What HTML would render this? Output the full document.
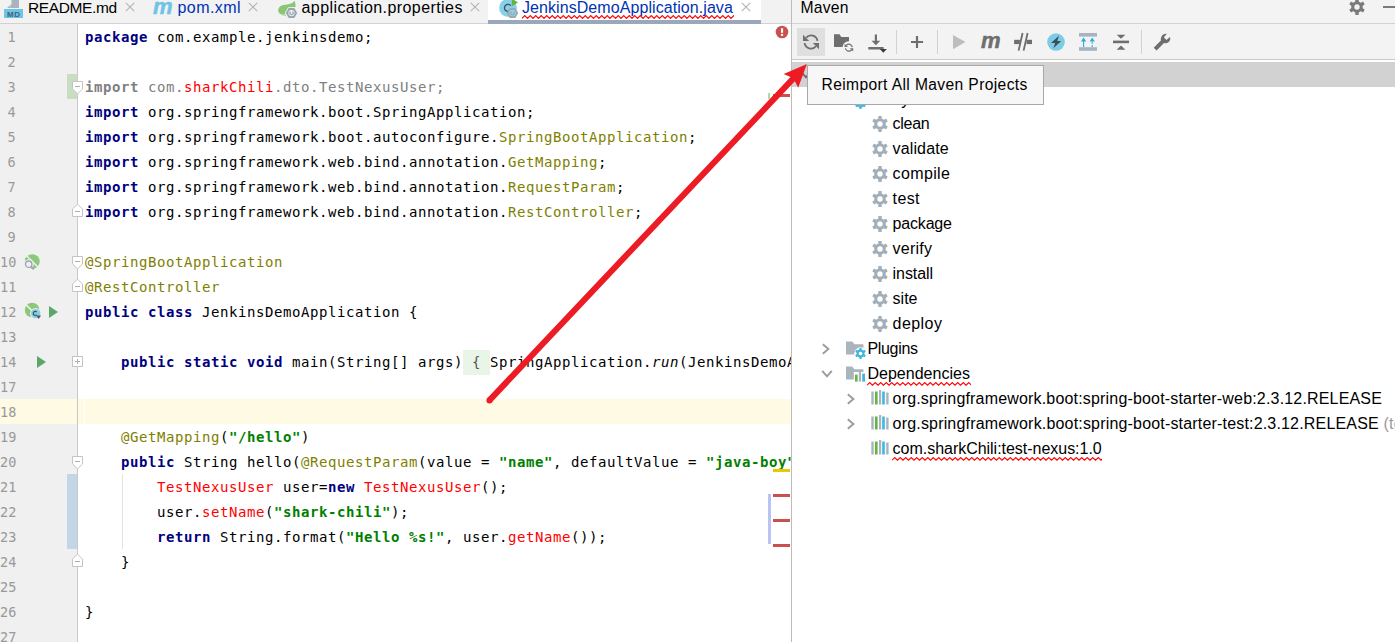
<!DOCTYPE html>
<html>
<head>
<meta charset="utf-8">
<title>JenkinsDemoApplication.java</title>
<style>
html,body{margin:0;padding:0;}
body{width:1395px;height:642px;overflow:hidden;background:#fff;position:relative;font-family:"Liberation Sans","DejaVu Sans",sans-serif;}
.abs{position:absolute;}
/* ---------- tab bar ---------- */
#tabs{left:0;top:0;width:791px;height:23px;background:#f2f2f2;border-bottom:1px solid #d1d1d1;}
.tab{position:absolute;top:-3px;height:22px;line-height:22px;font-size:16px;color:#000;white-space:nowrap;}
#activetab{left:488px;top:0;width:273px;height:20px;background:#fff;}
#activeline{left:488px;top:20px;width:273px;height:4px;background:#9aa7bd;}
/* ---------- editor ---------- */
#gutter{left:0;top:24px;width:77px;height:618px;background:#f0f0f0;border-right:1px solid #c9c9c9;}
#curline{left:78px;top:399px;width:713px;height:25px;background:#fffae3;}
#curgut{left:0;top:399px;width:77px;height:25px;background:#fffae3;}
.ln{position:absolute;left:0;width:15.6px;text-align:right;height:25px;line-height:25px;font-family:"DejaVu Sans Mono","Liberation Mono",monospace;font-size:13.5px;color:#999;white-space:pre;}
.cl{position:absolute;left:85px;height:25px;line-height:25px;font-family:"DejaVu Sans Mono","Liberation Mono",monospace;font-size:14px;letter-spacing:0.5713px;color:#000;white-space:pre;}
.k{color:#000080;font-weight:bold;}
.a{color:#808000;}
.s{color:#008000;font-weight:bold;}
.r{color:#ff0000;}
.g{color:#808080;}
.gk{color:#808080;font-weight:bold;}
.i{font-style:italic;}
.fold{background:#e9f5e6;color:#555;display:inline-block;height:25px;}
#edclip{left:0;top:24px;width:791px;height:618px;overflow:hidden;}
/* ---------- maven ---------- */
#divider{left:791px;top:0;width:1px;height:642px;background:#bcbcbc;}
#mv{left:792px;top:0;width:603px;height:642px;background:#fff;}
#mvhead{left:0;top:0;width:603px;height:23px;background:#f3f3f3;border-bottom:1px solid #d1d1d1;}
#mvtool{left:0;top:24px;width:603px;height:35px;background:#f3f3f3;border-bottom:1px solid #c9c9c9;}
#mvsel{left:0;top:62px;width:603px;height:25px;background:#d2d2d2;}
.tr{position:absolute;height:25px;line-height:25px;font-size:16px;color:#000;white-space:nowrap;}
#tip{left:15px;top:65px;width:235px;height:38px;background:#f7f7f7;border:1px solid #a8a8a8;box-sizing:content-box;}
#tip span{position:absolute;left:13.5px;top:0px;line-height:37px;font-size:15.6px;letter-spacing:0.385px;color:#000;white-space:nowrap;}
</style>
</head>
<body>
<!-- TAB BAR -->
<div id="tabs" class="abs"></div>
<div id="activetab" class="abs"></div>
<div id="activeline" class="abs"></div>
<div class="tab" style="left:28px;font-size:15.5px;letter-spacing:-0.38px;">README.md</div>
<div class="tab" style="left:177.5px;color:#0033b3;letter-spacing:0.42px;">pom.xml</div>
<div class="tab" style="left:301.5px;letter-spacing:0.42px;">application.properties</div>
<div class="tab" style="left:522px;color:#0033b3;letter-spacing:0.07px;">JenkinsDemoApplication.java</div>

<!-- EDITOR -->
<div id="gutter" class="abs"></div>
<div id="curgut" class="abs"></div>
<div id="curline" class="abs"></div>
<div id="edclip" class="abs">
<div id="lines">
<div class="ln" style="top:1px;">1</div>
<div class="cl" style="top:1px;"><span class="k">package</span> com.example.jenkinsdemo;</div>
<div class="ln" style="top:26px;">2</div>
<div class="ln" style="top:51px;">3</div>
<div class="cl" style="top:51px;"><span class="gk">import</span><span class="g"> com.</span><span class="r">sharkChili</span><span class="g">.dto.TestNexusUser;</span></div>
<div class="ln" style="top:76px;">4</div>
<div class="cl" style="top:76px;"><span class="k">import</span> org.springframework.boot.SpringApplication;</div>
<div class="ln" style="top:101px;">5</div>
<div class="cl" style="top:101px;"><span class="k">import</span> org.springframework.boot.autoconfigure.<span class="a">SpringBootApplication</span>;</div>
<div class="ln" style="top:126px;">6</div>
<div class="cl" style="top:126px;"><span class="k">import</span> org.springframework.web.bind.annotation.<span class="a">GetMapping</span>;</div>
<div class="ln" style="top:151px;">7</div>
<div class="cl" style="top:151px;"><span class="k">import</span> org.springframework.web.bind.annotation.<span class="a">RequestParam</span>;</div>
<div class="ln" style="top:176px;">8</div>
<div class="cl" style="top:176px;"><span class="k">import</span> org.springframework.web.bind.annotation.<span class="a">RestController</span>;</div>
<div class="ln" style="top:201px;">9</div>
<div class="ln" style="top:226px;">10</div>
<div class="cl" style="top:226px;"><span class="a">@SpringBootApplication</span></div>
<div class="ln" style="top:251px;">11</div>
<div class="cl" style="top:251px;"><span class="a">@RestController</span></div>
<div class="ln" style="top:276px;">12</div>
<div class="cl" style="top:276px;"><span class="k">public class</span> JenkinsDemoApplication {</div>
<div class="ln" style="top:301px;">13</div>
<div class="ln" style="top:326px;">14</div>
<div class="cl" style="top:326px;">    <span class="k">public static void</span> main(String[] args)<span class="fold"> { </span>SpringApplication.<span class="i">run</span>(JenkinsDemoApplication.<span class="k">class</span>, args); }</div>
<div class="ln" style="top:351px;">17</div>
<div class="ln" style="top:376px;">18</div>
<div class="ln" style="top:401px;">19</div>
<div class="cl" style="top:401px;">    <span class="a">@GetMapping</span>(<span class="s">"/hello"</span>)</div>
<div class="ln" style="top:426px;">20</div>
<div class="cl" style="top:426px;">    <span class="k">public</span> String hello(<span class="a">@RequestParam</span>(value = <span class="s">"name"</span>, defaultValue = <span class="s">"java-boy"</span>) String name) {</div>
<div class="ln" style="top:451px;">21</div>
<div class="cl" style="top:451px;">        <span class="r">TestNexusUser</span> user=<span class="k">new</span> <span class="r">TestNexusUser</span>();</div>
<div class="ln" style="top:476px;">22</div>
<div class="cl" style="top:476px;">        user.<span class="r">setName</span>(<span class="s">"shark-chili"</span>);</div>
<div class="ln" style="top:501px;">23</div>
<div class="cl" style="top:501px;">        <span class="k">return</span> String.format(<span class="s">"Hello %s!"</span>, user.<span class="r">getName</span>());</div>
<div class="ln" style="top:526px;">24</div>
<div class="cl" style="top:526px;">    }</div>
<div class="ln" style="top:551px;">25</div>
<div class="ln" style="top:576px;">26</div>
<div class="cl" style="top:576px;">}</div>
<div class="ln" style="top:601px;">27</div>
</div>
</div>

<!-- MAVEN -->
<div id="divider" class="abs"></div>
<div id="mv" class="abs">
  <div id="mvhead" class="abs"></div>
  <div class="tr" style="left:8.5px;top:-5px;font-size:15.7px;letter-spacing:0.2px;color:#000;">Maven</div>
  <div id="mvtool" class="abs"></div>
  <div id="mvsel" class="abs"></div>
  <div id="tree">
<svg class="abs" style="left:7.5px;top:70px" width="12" height="10" viewBox="0 0 12 10"><path d="M1.2 1.8 L6 7.4 L10.8 1.8" fill="none" stroke="#6e6e6e" stroke-width="1.9"/></svg>
<svg class="abs" style="left:54px;top:91px" width="20" height="18" viewBox="0 0 20 18"><path d="M0 0.4 H6.2 L8.4 3.2 H17.4 V13.6 H0Z" fill="#aab4bc"/><circle cx="14.5" cy="12.6" r="6.3" fill="#fff"/></svg>
<svg class="abs" style="left:63px;top:98px" width="11" height="11" viewBox="0 0 16 16"><g fill="#40b6e0"><rect x="6.3" y="0" width="3.4" height="4" rx="0.6" transform="rotate(0 8 8)"/><rect x="6.3" y="0" width="3.4" height="4" rx="0.6" transform="rotate(60 8 8)"/><rect x="6.3" y="0" width="3.4" height="4" rx="0.6" transform="rotate(120 8 8)"/><rect x="6.3" y="0" width="3.4" height="4" rx="0.6" transform="rotate(180 8 8)"/><rect x="6.3" y="0" width="3.4" height="4" rx="0.6" transform="rotate(240 8 8)"/><rect x="6.3" y="0" width="3.4" height="4" rx="0.6" transform="rotate(300 8 8)"/></g><circle cx="8" cy="8" r="4.25" fill="none" stroke="#40b6e0" stroke-width="3.1"/></svg>
<div class="tr" style="left:75.4px;top:87px;letter-spacing:0px;color:#000;">Lifecycle</div>
<svg class="abs" style="left:80px;top:116px" width="16" height="16" viewBox="0 0 16 16"><g fill="#a3afb8"><rect x="6.3" y="0" width="3.4" height="4" rx="0.6" transform="rotate(0 8 8)"/><rect x="6.3" y="0" width="3.4" height="4" rx="0.6" transform="rotate(60 8 8)"/><rect x="6.3" y="0" width="3.4" height="4" rx="0.6" transform="rotate(120 8 8)"/><rect x="6.3" y="0" width="3.4" height="4" rx="0.6" transform="rotate(180 8 8)"/><rect x="6.3" y="0" width="3.4" height="4" rx="0.6" transform="rotate(240 8 8)"/><rect x="6.3" y="0" width="3.4" height="4" rx="0.6" transform="rotate(300 8 8)"/></g><circle cx="8" cy="8" r="4.25" fill="none" stroke="#a3afb8" stroke-width="3.1"/></svg>
<div class="tr" style="left:100.6px;top:111px;letter-spacing:-0.27px;color:#000;">clean</div>
<svg class="abs" style="left:80px;top:141px" width="16" height="16" viewBox="0 0 16 16"><g fill="#a3afb8"><rect x="6.3" y="0" width="3.4" height="4" rx="0.6" transform="rotate(0 8 8)"/><rect x="6.3" y="0" width="3.4" height="4" rx="0.6" transform="rotate(60 8 8)"/><rect x="6.3" y="0" width="3.4" height="4" rx="0.6" transform="rotate(120 8 8)"/><rect x="6.3" y="0" width="3.4" height="4" rx="0.6" transform="rotate(180 8 8)"/><rect x="6.3" y="0" width="3.4" height="4" rx="0.6" transform="rotate(240 8 8)"/><rect x="6.3" y="0" width="3.4" height="4" rx="0.6" transform="rotate(300 8 8)"/></g><circle cx="8" cy="8" r="4.25" fill="none" stroke="#a3afb8" stroke-width="3.1"/></svg>
<div class="tr" style="left:100.6px;top:136px;letter-spacing:0.13px;color:#000;">validate</div>
<svg class="abs" style="left:80px;top:166px" width="16" height="16" viewBox="0 0 16 16"><g fill="#a3afb8"><rect x="6.3" y="0" width="3.4" height="4" rx="0.6" transform="rotate(0 8 8)"/><rect x="6.3" y="0" width="3.4" height="4" rx="0.6" transform="rotate(60 8 8)"/><rect x="6.3" y="0" width="3.4" height="4" rx="0.6" transform="rotate(120 8 8)"/><rect x="6.3" y="0" width="3.4" height="4" rx="0.6" transform="rotate(180 8 8)"/><rect x="6.3" y="0" width="3.4" height="4" rx="0.6" transform="rotate(240 8 8)"/><rect x="6.3" y="0" width="3.4" height="4" rx="0.6" transform="rotate(300 8 8)"/></g><circle cx="8" cy="8" r="4.25" fill="none" stroke="#a3afb8" stroke-width="3.1"/></svg>
<div class="tr" style="left:100.6px;top:161px;letter-spacing:0.366px;color:#000;">compile</div>
<svg class="abs" style="left:80px;top:191px" width="16" height="16" viewBox="0 0 16 16"><g fill="#a3afb8"><rect x="6.3" y="0" width="3.4" height="4" rx="0.6" transform="rotate(0 8 8)"/><rect x="6.3" y="0" width="3.4" height="4" rx="0.6" transform="rotate(60 8 8)"/><rect x="6.3" y="0" width="3.4" height="4" rx="0.6" transform="rotate(120 8 8)"/><rect x="6.3" y="0" width="3.4" height="4" rx="0.6" transform="rotate(180 8 8)"/><rect x="6.3" y="0" width="3.4" height="4" rx="0.6" transform="rotate(240 8 8)"/><rect x="6.3" y="0" width="3.4" height="4" rx="0.6" transform="rotate(300 8 8)"/></g><circle cx="8" cy="8" r="4.25" fill="none" stroke="#a3afb8" stroke-width="3.1"/></svg>
<div class="tr" style="left:100.6px;top:186px;letter-spacing:0.376px;color:#000;">test</div>
<svg class="abs" style="left:80px;top:216px" width="16" height="16" viewBox="0 0 16 16"><g fill="#a3afb8"><rect x="6.3" y="0" width="3.4" height="4" rx="0.6" transform="rotate(0 8 8)"/><rect x="6.3" y="0" width="3.4" height="4" rx="0.6" transform="rotate(60 8 8)"/><rect x="6.3" y="0" width="3.4" height="4" rx="0.6" transform="rotate(120 8 8)"/><rect x="6.3" y="0" width="3.4" height="4" rx="0.6" transform="rotate(180 8 8)"/><rect x="6.3" y="0" width="3.4" height="4" rx="0.6" transform="rotate(240 8 8)"/><rect x="6.3" y="0" width="3.4" height="4" rx="0.6" transform="rotate(300 8 8)"/></g><circle cx="8" cy="8" r="4.25" fill="none" stroke="#a3afb8" stroke-width="3.1"/></svg>
<div class="tr" style="left:100.6px;top:211px;letter-spacing:-0.186px;color:#000;">package</div>
<svg class="abs" style="left:80px;top:241px" width="16" height="16" viewBox="0 0 16 16"><g fill="#a3afb8"><rect x="6.3" y="0" width="3.4" height="4" rx="0.6" transform="rotate(0 8 8)"/><rect x="6.3" y="0" width="3.4" height="4" rx="0.6" transform="rotate(60 8 8)"/><rect x="6.3" y="0" width="3.4" height="4" rx="0.6" transform="rotate(120 8 8)"/><rect x="6.3" y="0" width="3.4" height="4" rx="0.6" transform="rotate(180 8 8)"/><rect x="6.3" y="0" width="3.4" height="4" rx="0.6" transform="rotate(240 8 8)"/><rect x="6.3" y="0" width="3.4" height="4" rx="0.6" transform="rotate(300 8 8)"/></g><circle cx="8" cy="8" r="4.25" fill="none" stroke="#a3afb8" stroke-width="3.1"/></svg>
<div class="tr" style="left:100.6px;top:236px;letter-spacing:0.244px;color:#000;">verify</div>
<svg class="abs" style="left:80px;top:266px" width="16" height="16" viewBox="0 0 16 16"><g fill="#a3afb8"><rect x="6.3" y="0" width="3.4" height="4" rx="0.6" transform="rotate(0 8 8)"/><rect x="6.3" y="0" width="3.4" height="4" rx="0.6" transform="rotate(60 8 8)"/><rect x="6.3" y="0" width="3.4" height="4" rx="0.6" transform="rotate(120 8 8)"/><rect x="6.3" y="0" width="3.4" height="4" rx="0.6" transform="rotate(180 8 8)"/><rect x="6.3" y="0" width="3.4" height="4" rx="0.6" transform="rotate(240 8 8)"/><rect x="6.3" y="0" width="3.4" height="4" rx="0.6" transform="rotate(300 8 8)"/></g><circle cx="8" cy="8" r="4.25" fill="none" stroke="#a3afb8" stroke-width="3.1"/></svg>
<div class="tr" style="left:100.6px;top:261px;letter-spacing:-0.072px;color:#000;">install</div>
<svg class="abs" style="left:80px;top:291px" width="16" height="16" viewBox="0 0 16 16"><g fill="#a3afb8"><rect x="6.3" y="0" width="3.4" height="4" rx="0.6" transform="rotate(0 8 8)"/><rect x="6.3" y="0" width="3.4" height="4" rx="0.6" transform="rotate(60 8 8)"/><rect x="6.3" y="0" width="3.4" height="4" rx="0.6" transform="rotate(120 8 8)"/><rect x="6.3" y="0" width="3.4" height="4" rx="0.6" transform="rotate(180 8 8)"/><rect x="6.3" y="0" width="3.4" height="4" rx="0.6" transform="rotate(240 8 8)"/><rect x="6.3" y="0" width="3.4" height="4" rx="0.6" transform="rotate(300 8 8)"/></g><circle cx="8" cy="8" r="4.25" fill="none" stroke="#a3afb8" stroke-width="3.1"/></svg>
<div class="tr" style="left:100.6px;top:286px;letter-spacing:0px;color:#000;">site</div>
<svg class="abs" style="left:80px;top:316px" width="16" height="16" viewBox="0 0 16 16"><g fill="#a3afb8"><rect x="6.3" y="0" width="3.4" height="4" rx="0.6" transform="rotate(0 8 8)"/><rect x="6.3" y="0" width="3.4" height="4" rx="0.6" transform="rotate(60 8 8)"/><rect x="6.3" y="0" width="3.4" height="4" rx="0.6" transform="rotate(120 8 8)"/><rect x="6.3" y="0" width="3.4" height="4" rx="0.6" transform="rotate(180 8 8)"/><rect x="6.3" y="0" width="3.4" height="4" rx="0.6" transform="rotate(240 8 8)"/><rect x="6.3" y="0" width="3.4" height="4" rx="0.6" transform="rotate(300 8 8)"/></g><circle cx="8" cy="8" r="4.25" fill="none" stroke="#a3afb8" stroke-width="3.1"/></svg>
<div class="tr" style="left:100.6px;top:311px;letter-spacing:0.441px;color:#000;">deploy</div>
<svg class="abs" style="left:29px;top:343px" width="10" height="12" viewBox="0 0 10 12"><path d="M1.8 1.2 L7.4 6 L1.8 10.8" fill="none" stroke="#9b9b9b" stroke-width="1.9"/></svg>
<svg class="abs" style="left:54px;top:341px" width="20" height="18" viewBox="0 0 20 18"><path d="M0 0.4 H6.2 L8.4 3.2 H17.4 V13.6 H0Z" fill="#aab4bc"/><circle cx="14.5" cy="12.6" r="6.3" fill="#fff"/></svg>
<svg class="abs" style="left:63px;top:348px" width="11" height="11" viewBox="0 0 16 16"><g fill="#40b6e0"><rect x="6.3" y="0" width="3.4" height="4" rx="0.6" transform="rotate(0 8 8)"/><rect x="6.3" y="0" width="3.4" height="4" rx="0.6" transform="rotate(60 8 8)"/><rect x="6.3" y="0" width="3.4" height="4" rx="0.6" transform="rotate(120 8 8)"/><rect x="6.3" y="0" width="3.4" height="4" rx="0.6" transform="rotate(180 8 8)"/><rect x="6.3" y="0" width="3.4" height="4" rx="0.6" transform="rotate(240 8 8)"/><rect x="6.3" y="0" width="3.4" height="4" rx="0.6" transform="rotate(300 8 8)"/></g><circle cx="8" cy="8" r="4.25" fill="none" stroke="#40b6e0" stroke-width="3.1"/></svg>
<div class="tr" style="left:75.4px;top:336px;letter-spacing:-0.312px;color:#000;">Plugins</div>
<svg class="abs" style="left:28.5px;top:369px" width="12" height="10" viewBox="0 0 12 10"><path d="M1.2 1.8 L6 7.4 L10.8 1.8" fill="none" stroke="#9b9b9b" stroke-width="1.9"/></svg>
<svg class="abs" style="left:54px;top:366px" width="20" height="18" viewBox="0 0 20 18"><path d="M0 0.4 H6.2 L8.4 3.2 H17.4 V13.6 H0Z" fill="#aab4bc"/><rect x="7.8" y="6" width="12.2" height="12" fill="#fff"/><rect x="9" y="8.6" width="2.6" height="7" fill="#62b543"/><rect x="12.8" y="5.6" width="2.2" height="10" fill="#aab4bc"/><rect x="16.2" y="7.6" width="2.8" height="8" fill="#40b6e0"/></svg>
<div class="tr" style="left:75.4px;top:361px;letter-spacing:0.025px;color:#000;">Dependencies</div>
<svg class="abs" style="left:75.0px;top:381.5px" width="104" height="4" viewBox="0 0 104 4"><path d="M0 3.2 L2.75 0.6 L5.5 3.2 L8.25 0.6 L11 3.2 L13.75 0.6 L16.5 3.2 L19.25 0.6 L22 3.2 L24.75 0.6 L27.5 3.2 L30.25 0.6 L33 3.2 L35.75 0.6 L38.5 3.2 L41.25 0.6 L44 3.2 L46.75 0.6 L49.5 3.2 L52.25 0.6 L55 3.2 L57.75 0.6 L60.5 3.2 L63.25 0.6 L66 3.2 L68.75 0.6 L71.5 3.2 L74.25 0.6 L77 3.2 L79.75 0.6 L82.5 3.2 L85.25 0.6 L88 3.2 L90.75 0.6 L93.5 3.2 L96.25 0.6 L99 3.2 L101.75 0.6 L104.5 3.2" fill="none" stroke="#ff0000" stroke-width="1.15"/></svg>
<svg class="abs" style="left:54px;top:393px" width="10" height="12" viewBox="0 0 10 12"><path d="M1.8 1.2 L7.4 6 L1.8 10.8" fill="none" stroke="#9b9b9b" stroke-width="1.9"/></svg>
<svg class="abs" style="left:79px;top:390px" width="18" height="15" viewBox="0 0 18 15"><rect x="0.3" y="1.5" width="2.4" height="13" fill="#aab4bc"/><rect x="4" y="1.5" width="2.6" height="13" fill="#62b543"/><rect x="8" y="0" width="2.2" height="14.5" fill="#aab4bc"/><rect x="11.2" y="1.5" width="2.6" height="13" fill="#40b6e0"/><rect x="15.2" y="2.5" width="2.4" height="12" fill="#aab4bc"/></svg>
<div class="tr" style="left:100.6px;top:386px;letter-spacing:0.175px;color:#000;">org.springframework.boot:spring-boot-starter-web:2.3.12.RELEASE</div>
<svg class="abs" style="left:54px;top:418px" width="10" height="12" viewBox="0 0 10 12"><path d="M1.8 1.2 L7.4 6 L1.8 10.8" fill="none" stroke="#9b9b9b" stroke-width="1.9"/></svg>
<svg class="abs" style="left:79px;top:415px" width="18" height="15" viewBox="0 0 18 15"><rect x="0.3" y="1.5" width="2.4" height="13" fill="#aab4bc"/><rect x="4" y="1.5" width="2.6" height="13" fill="#62b543"/><rect x="8" y="0" width="2.2" height="14.5" fill="#aab4bc"/><rect x="11.2" y="1.5" width="2.6" height="13" fill="#40b6e0"/><rect x="15.2" y="2.5" width="2.4" height="12" fill="#aab4bc"/></svg>
<div class="tr" style="left:100.6px;top:411px;letter-spacing:0.178px;color:#000;">org.springframework.boot:spring-boot-starter-test:2.3.12.RELEASE<span style="color:#999"> (test)</span></div>
<svg class="abs" style="left:79px;top:440px" width="18" height="15" viewBox="0 0 18 15"><rect x="0.3" y="1.5" width="2.4" height="13" fill="#aab4bc"/><rect x="4" y="1.5" width="2.6" height="13" fill="#62b543"/><rect x="8" y="0" width="2.2" height="14.5" fill="#aab4bc"/><rect x="11.2" y="1.5" width="2.6" height="13" fill="#40b6e0"/><rect x="15.2" y="2.5" width="2.4" height="12" fill="#aab4bc"/></svg>
<div class="tr" style="left:100.6px;top:436px;letter-spacing:-0.026px;color:#000;">com.sharkChili:test-nexus:1.0</div>
<svg class="abs" style="left:100.0px;top:456.6px" width="210" height="4" viewBox="0 0 210 4"><path d="M0 3.2 L2.75 0.6 L5.5 3.2 L8.25 0.6 L11 3.2 L13.75 0.6 L16.5 3.2 L19.25 0.6 L22 3.2 L24.75 0.6 L27.5 3.2 L30.25 0.6 L33 3.2 L35.75 0.6 L38.5 3.2 L41.25 0.6 L44 3.2 L46.75 0.6 L49.5 3.2 L52.25 0.6 L55 3.2 L57.75 0.6 L60.5 3.2 L63.25 0.6 L66 3.2 L68.75 0.6 L71.5 3.2 L74.25 0.6 L77 3.2 L79.75 0.6 L82.5 3.2 L85.25 0.6 L88 3.2 L90.75 0.6 L93.5 3.2 L96.25 0.6 L99 3.2 L101.75 0.6 L104.5 3.2 L107.25 0.6 L110 3.2 L112.75 0.6 L115.5 3.2 L118.25 0.6 L121 3.2 L123.75 0.6 L126.5 3.2 L129.25 0.6 L132 3.2 L134.75 0.6 L137.5 3.2 L140.25 0.6 L143 3.2 L145.75 0.6 L148.5 3.2 L151.25 0.6 L154 3.2 L156.75 0.6 L159.5 3.2 L162.25 0.6 L165 3.2 L167.75 0.6 L170.5 3.2 L173.25 0.6 L176 3.2 L178.75 0.6 L181.5 3.2 L184.25 0.6 L187 3.2 L189.75 0.6 L192.5 3.2 L195.25 0.6 L198 3.2 L200.75 0.6 L203.5 3.2 L206.25 0.6 L209 3.2 L211.75 0.6" fill="none" stroke="#ff0000" stroke-width="1.15"/></svg>
</div>
  <div id="tip" class="abs"><span>Reimport All Maven Projects</span></div>
</div>
<svg class="abs" style="left:125px;top:2px;" width="10" height="10" viewBox="0 0 10 10"><path d="M0.8 0.8 L9.2 9.2 M9.2 0.8 L0.8 9.2" stroke="#b3b3b3" stroke-width="1.1" fill="none"/></svg>
<svg class="abs" style="left:248px;top:2px;" width="10" height="10" viewBox="0 0 10 10"><path d="M0.8 0.8 L9.2 9.2 M9.2 0.8 L0.8 9.2" stroke="#b3b3b3" stroke-width="1.1" fill="none"/></svg>
<svg class="abs" style="left:470px;top:2px;" width="10" height="10" viewBox="0 0 10 10"><path d="M0.8 0.8 L9.2 9.2 M9.2 0.8 L0.8 9.2" stroke="#b3b3b3" stroke-width="1.1" fill="none"/></svg>
<svg class="abs" style="left:741px;top:2px;" width="10" height="10" viewBox="0 0 10 10"><path d="M0.8 0.8 L9.2 9.2 M9.2 0.8 L0.8 9.2" stroke="#b3b3b3" stroke-width="1.1" fill="none"/></svg>
<svg class="abs" style="left:4px;top:0px;" width="20" height="19" viewBox="0 0 20 19"><path d="M3 0 H15 V8 H3Z" fill="#aab4bc"/><path d="M3 0 H7.5 V4.2 L3 8Z" fill="#f2f2f2"/><path d="M3.8 7 L7 4.4 V7Z" fill="#c3cbd1"/><rect x="0" y="9" width="19" height="9" fill="#6ec4e6"/><text x="9.9" y="16.5" font-family="Liberation Sans,sans-serif" font-size="8" font-weight="bold" fill="#3f6478" text-anchor="middle" letter-spacing="0.8">MD</text></svg>
<div class="abs" style="left:153px;top:-8px;font:italic bold 22px/30px 'Liberation Sans',sans-serif;color:#6ec4e6;-webkit-text-stroke:0.5px #6ec4e6;">m</div>
<svg class="abs" style="left:277px;top:0px;" width="22" height="19" viewBox="0 0 22 19"><path d="M17.6 0.7 C18.4 3 18.8 6.4 18.4 7.4 C14 6 10 9.5 9.4 14.2 C7 14.8 4.6 14.8 3.6 14.2 C0.6 12.4 0.4 8.6 3.2 6.2 C6.6 3.4 13.6 6 17.6 0.7Z" fill="#89c777"/><path d="M4.4 15 C6 15.6 7.6 15.6 9 15.2 L9 16 C7.4 16.2 5.8 16 4.4 15Z" fill="#89c777"/><polygon points="21.20,13.00 17.85,18.80 11.15,18.80 7.80,13.00 11.15,7.20 17.85,7.20" fill="#f2f2f2"/><polygon points="20.20,13.00 17.35,17.94 11.65,17.94 8.80,13.00 11.65,8.06 17.35,8.06" fill="#9aa7b0"/><circle cx="14.5" cy="13" r="3.1" fill="#eef0f2"/><path d="M13.48 11.70 A1.65 1.65 0 1 0 15.52 11.70" fill="none" stroke="#9aa7b0" stroke-width="1.4"/></svg>
<svg class="abs" style="left:498px;top:0px;" width="22" height="19" viewBox="0 0 22 19"><circle cx="10" cy="7.9" r="8.9" fill="#86d0eb"/><path d="M12.9 5.7 A3.6 3.6 0 1 0 12.9 10.1" fill="none" stroke="#3d4f58" stroke-width="1.3"/><path d="M13.8 -1.5 L20 2.4 L13.8 6.2Z" fill="#62b543"/><polygon points="20.20,13.00 17.35,17.94 11.65,17.94 8.80,13.00 11.65,8.06 17.35,8.06" fill="#9aa7b0"/><circle cx="14.5" cy="13" r="3.3" fill="#8fd3ec"/><path d="M13.45 11.7 A1.7 1.7 0 1 0 15.55 11.7" fill="none" stroke="#9aa7b0" stroke-width="1.3"/></svg>
<svg class="abs" style="left:522px;top:15px;" width="212" height="4" viewBox="0 0 212 4"><path d="M0 3.4 L2.75 0.6 L5.5 3.4 L8.25 0.6 L11 3.4 L13.75 0.6 L16.5 3.4 L19.25 0.6 L22 3.4 L24.75 0.6 L27.5 3.4 L30.25 0.6 L33 3.4 L35.75 0.6 L38.5 3.4 L41.25 0.6 L44 3.4 L46.75 0.6 L49.5 3.4 L52.25 0.6 L55 3.4 L57.75 0.6 L60.5 3.4 L63.25 0.6 L66 3.4 L68.75 0.6 L71.5 3.4 L74.25 0.6 L77 3.4 L79.75 0.6 L82.5 3.4 L85.25 0.6 L88 3.4 L90.75 0.6 L93.5 3.4 L96.25 0.6 L99 3.4 L101.75 0.6 L104.5 3.4 L107.25 0.6 L110 3.4 L112.75 0.6 L115.5 3.4 L118.25 0.6 L121 3.4 L123.75 0.6 L126.5 3.4 L129.25 0.6 L132 3.4 L134.75 0.6 L137.5 3.4 L140.25 0.6 L143 3.4 L145.75 0.6 L148.5 3.4 L151.25 0.6 L154 3.4 L156.75 0.6 L159.5 3.4 L162.25 0.6 L165 3.4 L167.75 0.6 L170.5 3.4 L173.25 0.6 L176 3.4 L178.75 0.6 L181.5 3.4 L184.25 0.6 L187 3.4 L189.75 0.6 L192.5 3.4 L195.25 0.6 L198 3.4 L200.75 0.6 L203.5 3.4 L206.25 0.6 L209 3.4 L211.75 0.6 L214.5 3.4" fill="none" stroke="#ff0000" stroke-width="1.15"/></svg>
<svg class="abs" style="left:775px;top:25px;" width="14" height="14" viewBox="0 0 14 14"><circle cx="7" cy="7" r="6.3" fill="#c9524f"/><rect x="6" y="3.2" width="2.1" height="4.6" fill="#fff"/><rect x="6" y="8.9" width="2.1" height="2" fill="#fff"/></svg>
<div class="abs" style="left:768px;top:93px;width:2px;height:6px;background:#a6e0a6;"></div>
<div class="abs" style="left:773px;top:94px;width:17px;height:3px;background:#c8504f;"></div>
<div class="abs" style="left:773px;top:469px;width:17px;height:3px;background:#ebc700;"></div>
<div class="abs" style="left:768px;top:494px;width:3px;height:50px;background:#b9c4f5;"></div>
<div class="abs" style="left:773px;top:494px;width:17px;height:3px;background:#c8504f;"></div>
<div class="abs" style="left:773px;top:519px;width:17px;height:3px;background:#c8504f;"></div>
<div class="abs" style="left:773px;top:544px;width:17px;height:3px;background:#c8504f;"></div>
<div class="abs" style="left:67px;top:74px;width:10px;height:25px;background:#c9dec1;"></div>
<div class="abs" style="left:67px;top:474px;width:10px;height:75px;background:#c3d6e8;"></div>
<div class="abs" style="left:84px;top:399px;width:1px;height:25px;background:#ffffff;"></div>
<div class="abs" style="left:122px;top:474px;width:1px;height:75px;background:#e3e3e3;"></div>
<svg class="abs" style="left:72px;top:81px;" width="11" height="14" viewBox="0 0 11 14"><path d="M0.5 0.5 H10.5 V8 L5.5 12.8 L0.5 8Z" fill="#fff" stroke="#c4c4c4" stroke-width="1"/><path d="M3 5.5 H8" stroke="#adadad" stroke-width="1"/></svg>
<svg class="abs" style="left:72px;top:203px;" width="11" height="14" viewBox="0 0 11 14"><path d="M0.5 13.5 H10.5 V6 L5.5 1.2 L0.5 6Z" fill="#fff" stroke="#c4c4c4" stroke-width="1"/><path d="M3 8.5 H8" stroke="#adadad" stroke-width="1"/></svg>
<svg class="abs" style="left:72px;top:256px;" width="11" height="14" viewBox="0 0 11 14"><path d="M0.5 0.5 H10.5 V8 L5.5 12.8 L0.5 8Z" fill="#fff" stroke="#c4c4c4" stroke-width="1"/><path d="M3 5.5 H8" stroke="#adadad" stroke-width="1"/></svg>
<svg class="abs" style="left:72px;top:278px;" width="11" height="14" viewBox="0 0 11 14"><path d="M0.5 13.5 H10.5 V6 L5.5 1.2 L0.5 6Z" fill="#fff" stroke="#c4c4c4" stroke-width="1"/><path d="M3 8.5 H8" stroke="#adadad" stroke-width="1"/></svg>
<svg class="abs" style="left:72px;top:356px;" width="11" height="11" viewBox="0 0 11 11"><rect x="0.5" y="0.5" width="10" height="10" fill="#fff" stroke="#c4c4c4"/><path d="M3 5.5 H8 M5.5 3 V8" stroke="#adadad" stroke-width="1"/></svg>
<svg class="abs" style="left:72px;top:456px;" width="11" height="14" viewBox="0 0 11 14"><path d="M0.5 0.5 H10.5 V8 L5.5 12.8 L0.5 8Z" fill="#fff" stroke="#c4c4c4" stroke-width="1"/><path d="M3 5.5 H8" stroke="#adadad" stroke-width="1"/></svg>
<svg class="abs" style="left:72px;top:553px;" width="11" height="14" viewBox="0 0 11 14"><path d="M0.5 13.5 H10.5 V6 L5.5 1.2 L0.5 6Z" fill="#fff" stroke="#c4c4c4" stroke-width="1"/><path d="M3 8.5 H8" stroke="#adadad" stroke-width="1"/></svg>
<svg class="abs" style="left:48.5px;top:305.5px;" width="9" height="12" viewBox="0 0 9 12"><path d="M0 0 L9 6.0 L0 12Z" fill="#59a869"/></svg>
<svg class="abs" style="left:36.5px;top:355.5px;" width="9" height="12" viewBox="0 0 9 12"><path d="M0 0 L9 6.0 L0 12Z" fill="#59a869"/></svg>
<svg class="abs" style="left:24px;top:253.6px;" width="17" height="17" viewBox="0 0 17 17"><circle cx="8.3" cy="7.6" r="7.4" fill="#8bc87a"/><path d="M1.6 0.8 L15.2 14.2" stroke="#f0f0f0" stroke-width="1.5"/><circle cx="4.7" cy="10.3" r="5" fill="#f0f0f0"/><path d="M0.6 5.6 L1.8 3.4 L3.4 5.2Z" fill="#8bc87a"/><path d="M12 11.2 L15 14" stroke="#f0f0f0" stroke-width="0"/><circle cx="4.7" cy="10.2" r="3.2" fill="none" stroke="#9aa7b0" stroke-width="1.3"/><path d="M7.1 12.6 L9.8 15.4" stroke="#9aa7b0" stroke-width="1.7"/></svg>
<svg class="abs" style="left:24px;top:302px;" width="18" height="18" viewBox="0 0 18 18"><circle cx="8.1" cy="8" r="7.3" fill="#8bc87a"/><path d="M1.6 2.4 L11 11.6" stroke="#f0f0f0" stroke-width="1.5" fill="none"/><circle cx="11.7" cy="11.6" r="5.6" fill="#f0f0f0"/><circle cx="11.7" cy="11.6" r="4.7" fill="#84cfe9"/><path d="M12.7 10 A2 2 0 1 0 12.7 12.8" fill="none" stroke="#3d4f58" stroke-width="1.1"/><path d="M12.3 13.6 H17 L14.65 16.9Z" fill="#555"/></svg>
<svg class="abs" style="left:1349px;top:-1px;" width="16" height="16" viewBox="0 0 16 16"><g fill="#7a7a7a"><rect x="6.3" y="0" width="3.4" height="4" rx="0.6" transform="rotate(0 8 8)"/><rect x="6.3" y="0" width="3.4" height="4" rx="0.6" transform="rotate(60 8 8)"/><rect x="6.3" y="0" width="3.4" height="4" rx="0.6" transform="rotate(120 8 8)"/><rect x="6.3" y="0" width="3.4" height="4" rx="0.6" transform="rotate(180 8 8)"/><rect x="6.3" y="0" width="3.4" height="4" rx="0.6" transform="rotate(240 8 8)"/><rect x="6.3" y="0" width="3.4" height="4" rx="0.6" transform="rotate(300 8 8)"/></g><circle cx="8" cy="8" r="4.25" fill="none" stroke="#7a7a7a" stroke-width="3.1"/></svg>
<div class="abs" style="left:1383px;top:6px;width:12px;height:2px;background:#7a7a7a;"></div>
<div class="abs" style="left:797px;top:28px;width:27.5px;height:27.5px;background:#dfdfdf;"></div>
<svg class="abs" style="left:803px;top:34px;" width="16" height="16" viewBox="0 0 16 16"><path d="M14.45 6.9 A6.5 6.5 0 0 0 3.2 3.6" fill="none" stroke="#6e6e6e" stroke-width="1.9"/><path d="M1.55 9.1 A6.5 6.5 0 0 0 12.8 12.4" fill="none" stroke="#6e6e6e" stroke-width="1.9"/><path d="M0 0.8 V6.9 H6.2Z" fill="#6e6e6e"/><path d="M16 15.2 V9.1 H9.8Z" fill="#6e6e6e"/></svg>
<svg class="abs" style="left:834px;top:34px;" width="20" height="19" viewBox="0 0 20 19"><path d="M0 0.2 H5.6 L7.2 3 H15 V12.9 H0Z" fill="#6e6e6e"/><circle cx="14.9" cy="13.6" r="6.4" fill="#f3f3f3"/><g transform="translate(10.6 9.4) scale(0.535)"><path d="M14.45 6.9 A6.5 6.5 0 0 0 3.2 3.6" fill="none" stroke="#6e6e6e" stroke-width="2.3"/><path d="M1.55 9.1 A6.5 6.5 0 0 0 12.8 12.4" fill="none" stroke="#6e6e6e" stroke-width="2.3"/><path d="M0 0.8 V6.9 H6.2Z" fill="#6e6e6e"/><path d="M16 15.2 V9.1 H9.8Z" fill="#6e6e6e"/></g></svg>
<svg class="abs" style="left:867px;top:34px;" width="21" height="20" viewBox="0 0 21 20"><rect x="7.8" y="0.5" width="2.2" height="7" fill="#6e6e6e"/><path d="M4.5 6.8 H13.3 L8.9 11.3Z" fill="#6e6e6e"/><rect x="1.3" y="13" width="15.3" height="2.5" fill="#6e6e6e"/><path d="M12.8 15 H19.8 L16.3 18.8Z" fill="#3a3a3a"/></svg>
<div class="abs" style="left:896px;top:30px;width:1px;height:24px;background:#d1d1d1;"></div>
<svg class="abs" style="left:911px;top:35px;" width="13" height="14" viewBox="0 0 13 14"><path d="M6 0.9 V13 M-0.1 7 H12.1" stroke="#6e6e6e" stroke-width="2.2" fill="none"/></svg>
<div class="abs" style="left:937px;top:30px;width:1px;height:24px;background:#d1d1d1;"></div>
<svg class="abs" style="left:953px;top:35px;" width="12.5" height="14.2" viewBox="0 0 12.5 14.2"><path d="M0 0 L12.5 7.1 L0 14.2Z" fill="#bdbdbd"/></svg>
<div class="abs" style="left:981px;top:23.5px;font:italic bold 22px/34px 'Liberation Sans',sans-serif;color:#6e6e6e;-webkit-text-stroke:0.5px #6e6e6e;">m</div>
<svg class="abs" style="left:1013px;top:32px;" width="20" height="20" viewBox="0 0 20 20"><rect x="1.1" y="7.8" width="5.8" height="4.3" fill="#6e6e6e"/><rect x="13.5" y="7.8" width="5.5" height="4.3" fill="#6e6e6e"/><path d="M5.6 18.6 L9.6 1 M10.6 18.6 L14.6 1" stroke="#6e6e6e" stroke-width="1.8" fill="none"/></svg>
<svg class="abs" style="left:1047px;top:33px;" width="18" height="18" viewBox="0 0 18 18"><circle cx="9" cy="9" r="8.8" fill="#7fcbe6"/><path d="M12 2.8 L4 10 H8.2 L6.4 15.2 L14.2 8 H10.2Z" fill="#37505c"/></svg>
<svg class="abs" style="left:1079px;top:33px;" width="18" height="18" viewBox="0 0 18 18"><rect x="0" y="0" width="18" height="3.6" fill="#a7b3bd"/><rect x="0" y="14.2" width="18" height="3.6" fill="#a7b3bd"/><path d="M4.6 14 V6.4" stroke="#29abe2" stroke-width="1.1"/><path d="M2 8.4 L4.6 4.6 L7.2 8.4Z" fill="#29abe2"/><path d="M13.2 14 V6.4" stroke="#29abe2" stroke-width="1.1" stroke-dasharray="2 1.2"/><path d="M10.6 8.4 L13.2 4.6 L15.8 8.4Z" fill="#29abe2"/></svg>
<svg class="abs" style="left:1113px;top:34px;" width="16" height="16" viewBox="0 0 16 16"><path d="M3.6 0.8 H12.4 L8 4.8Z" fill="#6e6e6e"/><rect x="0" y="6.6" width="16" height="2.6" fill="#6e6e6e"/><path d="M3.6 15.8 H12.4 L8 11.6Z" fill="#6e6e6e"/></svg>
<div class="abs" style="left:1141px;top:30px;width:1px;height:24px;background:#d1d1d1;"></div>
<svg class="abs" style="left:1153px;top:32px;" width="19" height="19" viewBox="0 0 19 19"><path d="M0.7 15.65 L7.9 8.5 C7.3 5 9.6 1.3 13.9 1.8 L10.9 5.3 L13.4 7.9 L17 4.9 C18.2 8.8 14.8 11.9 11 11.1 L3.6 18.5Z" fill="#6e6e6e"/></svg>
<svg class="abs" style="left:0;top:0;z-index:50;pointer-events:none" width="1395" height="642" viewBox="0 0 1395 642"><path d="M487.2 398.2 L790.5 77.1 L783.7 74.1 L806.9 64.1 L798.2 87.8 L794.9 81.2 L491.6 402.4Z" fill="#ed1c24"/><circle cx="489.5" cy="400.4" r="3.05" fill="#ed1c24"/></svg>

</body>
</html>
